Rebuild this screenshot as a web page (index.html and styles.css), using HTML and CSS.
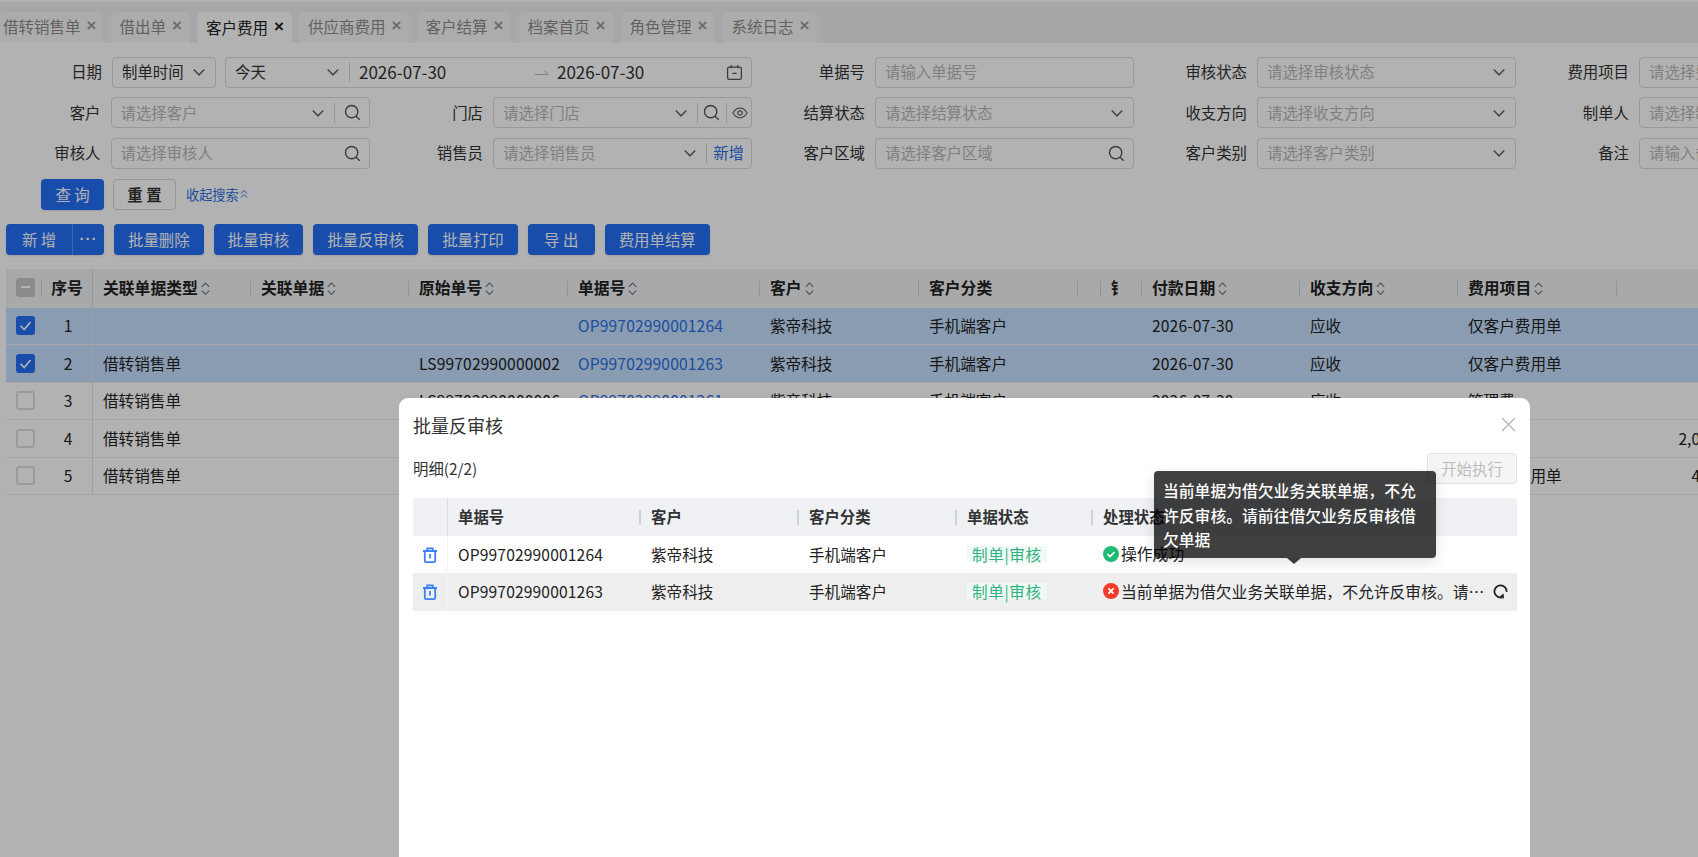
FILE: index.html
```html
<!DOCTYPE html>
<html lang="zh-CN">
<head>
  <meta charset="UTF-8" />
  <title>客户费用</title>
  <link rel="stylesheet" href="styles.css">
</head>
<body>
  <svg class="sprite" xmlns="http://www.w3.org/2000/svg">
    <symbol id="i-down" viewBox="0 0 12 12"><path d="M1.500 3.800 6 8.400l4.500-4.600" fill="none" stroke="currentColor" stroke-width="1.300"/></symbol>
    <symbol id="i-search" viewBox="0 0 16 16"><circle cx="7.200" cy="7.200" r="5.800" fill="none" stroke="currentColor" stroke-width="1.300"/><path d="m11.400 11.600 3.400 3.200" fill="none" stroke="currentColor" stroke-width="1.300"/></symbol>
    <symbol id="i-cal" viewBox="0 0 16 16"><rect x="1.500" y="3" width="13" height="11.500" rx="1.500" fill="none" stroke="currentColor" stroke-width="1.200"/><path d="M5 1v3M11 1v3M6 8.800h4" fill="none" stroke="currentColor" stroke-width="1.200"/></symbol>
    <symbol id="i-eye" viewBox="0 0 16 16"><path d="M1 8c1.800-3.200 4.200-4.800 7-4.800s5.200 1.600 7 4.800c-1.800 3.200-4.200 4.800-7 4.800S2.800 11.200 1 8z" fill="none" stroke="currentColor" stroke-width="1.200"/><circle cx="8" cy="8" r="2.200" fill="none" stroke="currentColor" stroke-width="1.200"/></symbol>
    <symbol id="i-sort" viewBox="0 0 10 16"><path d="M1.500 6.500 5 3l3.500 3.500M1.500 10 5 13.500 8.500 10" fill="none" stroke="currentColor" stroke-width="1.100"/></symbol>
    <symbol id="i-arrow" viewBox="0 0 16 8"><path d="M1 6.500h13L10.500 3" fill="none" stroke="currentColor" stroke-width="1"/></symbol>
    <symbol id="i-trash" viewBox="0 0 16 16"><path d="M1 4h14M5.200 4V1.400h5.600V4M2.800 4v9.800c0 .8.500 1.300 1.300 1.300h7.800c.8 0 1.300-.5 1.300-1.300V4M8 7v4.600" fill="none" stroke="currentColor" stroke-width="1.800"/></symbol>
    <symbol id="i-ok" viewBox="0 0 16 16"><circle cx="8" cy="8" r="8" fill="#22bb76"/><path d="m4.500 8.200 2.500 2.400 4.500-4.600" fill="none" stroke="#fff" stroke-width="1.700"/></symbol>
    <symbol id="i-err" viewBox="0 0 16 16"><circle cx="8" cy="8" r="8" fill="#f5392a"/><path d="m5.400 5.400 5.200 5.200M10.600 5.400l-5.200 5.200" fill="none" stroke="#fff" stroke-width="1.800"/></symbol>
    <symbol id="i-retry" viewBox="0 0 16 16"><path d="M9.800 14.200A6.500 6.500 0 1 1 14.500 8.400" fill="none" stroke="currentColor" stroke-width="1.900"/><path d="m11.400 10 .2 5.800-4.400-2.800z" fill="currentColor"/></symbol>
    <symbol id="i-close" viewBox="0 0 14 14"><path d="m1 1 12 12M13 1 1 13" fill="none" stroke="currentColor" stroke-width="1.200"/></symbol>
  </svg>

  <div class="top-line"></div>

  <div class="tabs">
    <div class="tab tab-first">借转销售单<span class="tab-x">×</span></div>
    <div class="tab tab-2">借出单<span class="tab-x">×</span></div>
    <div class="tab tab-3 active">客户费用<span class="tab-x">×</span></div>
    <div class="tab tab-4">供应商费用<span class="tab-x">×</span></div>
    <div class="tab tab-3">客户结算<span class="tab-x">×</span></div>
    <div class="tab tab-3">档案首页<span class="tab-x">×</span></div>
    <div class="tab tab-3">角色管理<span class="tab-x">×</span></div>
    <div class="tab tab-3">系统日志<span class="tab-x">×</span></div>
  </div>

  <!-- search form -->
  <div class="search-form">
    <div class="form-item span-2">
      <label>日期</label>
      <div class="date-group">
        <div class="field date-type"><span class="val">制单时间</span><svg class="ic-down"><use href="#i-down"/></svg></div>
        <div class="field date-range">
          <span class="val range-name">今天</span><svg class="ic-down"><use href="#i-down"/></svg><i class="sep"></i>
          <span class="val date-a">2026-07-30</span><svg class="ic-arrow"><use href="#i-arrow"/></svg>
          <span class="val date-b">2026-07-30</span><svg class="ic-search"><use href="#i-cal"/></svg>
        </div>
      </div>
    </div>
    <div class="form-item"><label>单据号</label><div class="field"><span class="ph">请输入单据号</span></div></div>
    <div class="form-item"><label>审核状态</label><div class="field"><span class="ph">请选择审核状态</span><svg class="ic-down"><use href="#i-down"/></svg></div></div>
    <div class="form-item"><label>费用项目</label><div class="field"><span class="ph">请选择费用项目</span><svg class="ic-down"><use href="#i-down"/></svg></div></div>

    <div class="form-item"><label>客户</label><div class="field"><span class="ph">请选择客户</span><svg class="ic-down"><use href="#i-down"/></svg><i class="sep"></i><svg class="ic-search"><use href="#i-search"/></svg></div></div>
    <div class="form-item"><label>门店</label><div class="field"><span class="ph">请选择门店</span><svg class="ic-down"><use href="#i-down"/></svg><i class="sep"></i><svg class="ic-search ic-tight"><use href="#i-search"/></svg><i class="sep sep-tight"></i><svg class="ic-eye"><use href="#i-eye"/></svg></div></div>
    <div class="form-item"><label>结算状态</label><div class="field"><span class="ph">请选择结算状态</span><svg class="ic-down"><use href="#i-down"/></svg></div></div>
    <div class="form-item"><label>收支方向</label><div class="field"><span class="ph">请选择收支方向</span><svg class="ic-down"><use href="#i-down"/></svg></div></div>
    <div class="form-item"><label>制单人</label><div class="field"><span class="ph">请选择制单人</span><svg class="ic-down"><use href="#i-down"/></svg></div></div>

    <div class="form-item"><label>审核人</label><div class="field"><span class="ph">请选择审核人</span><svg class="ic-search"><use href="#i-search"/></svg></div></div>
    <div class="form-item"><label>销售员</label><div class="field"><span class="ph">请选择销售员</span><svg class="ic-down"><use href="#i-down"/></svg><i class="sep"></i><a class="link add-link">新增</a></div></div>
    <div class="form-item"><label>客户区域</label><div class="field"><span class="ph">请选择客户区域</span><svg class="ic-search"><use href="#i-search"/></svg></div></div>
    <div class="form-item"><label>客户类别</label><div class="field"><span class="ph">请选择客户类别</span><svg class="ic-down"><use href="#i-down"/></svg></div></div>
    <div class="form-item"><label>备注</label><div class="field"><span class="ph">请输入备注</span></div></div>
  </div>

  <div class="search-actions">
    <button class="btn btn-primary btn-query">查 询</button>
    <button class="btn btn-default btn-reset">重 置</button>
    <a class="collapse-link">收起搜索<svg class="ic-collapse" viewBox="0 0 10 12"><path d="M2 5.500 5 2.500 8 5.500M2 9.500 5 6.500 8 9.500" fill="none" stroke="currentColor" stroke-width="1"/></svg></a>
  </div>

  <div class="toolbar">
    <div class="btn-split"><span class="split-main">新 增</span><span class="split-more">···</span></div>
    <button class="btn btn-primary">批量删除</button>
    <button class="btn btn-primary">批量审核</button>
    <button class="btn btn-primary">批量反审核</button>
    <button class="btn btn-primary">批量打印</button>
    <button class="btn btn-primary btn-export">导 出</button>
    <button class="btn btn-primary">费用单结算</button>
  </div>

  <!-- main list -->
  <table class="grid">
    <colgroup>
      <col class="c36"><col class="c51"><col class="c158"><col class="c158"><col class="c159"><col class="c192"><col class="c159"><col class="c159"><col class="c23"><col class="c41"><col class="c158"><col class="c158"><col class="c159"><col class="c132">
    </colgroup>
    <thead>
      <tr>
        <th class="cell-check"><span class="check check-half"></span></th>
        <th class="cell-no">序号</th>
        <th>关联单据类型<svg class="ic-sort"><use href="#i-sort"/></svg></th>
        <th>关联单据<svg class="ic-sort"><use href="#i-sort"/></svg></th>
        <th>原始单号<svg class="ic-sort"><use href="#i-sort"/></svg></th>
        <th>单据号<svg class="ic-sort"><use href="#i-sort"/></svg></th>
        <th>客户<svg class="ic-sort"><use href="#i-sort"/></svg></th>
        <th>客户分类</th>
        <th></th>
        <th><span class="th-clip">销售员</span></th>
        <th>付款日期<svg class="ic-sort"><use href="#i-sort"/></svg></th>
        <th>收支方向<svg class="ic-sort"><use href="#i-sort"/></svg></th>
        <th>费用项目<svg class="ic-sort"><use href="#i-sort"/></svg></th>
        <th></th>
      </tr>
    </thead>
    <tbody>
      <tr class="selected">
        <td class="cell-check"><span class="check check-on"><svg viewBox="0 0 12 12"><path d="m2 6.200 3 3 5-6" fill="none" stroke="#fff" stroke-width="1.400"/></svg></span></td>
        <td class="cell-no">1</td><td></td><td></td><td></td>
        <td class="code"><a class="link">OP99702990001264</a></td><td>紫帝科技</td><td>手机端客户</td><td></td><td></td>
        <td class="code">2026-07-30</td><td>应收</td><td>仅客户费用单</td><td class="num"></td>
      </tr>
      <tr class="selected">
        <td class="cell-check"><span class="check check-on"><svg viewBox="0 0 12 12"><path d="m2 6.200 3 3 5-6" fill="none" stroke="#fff" stroke-width="1.400"/></svg></span></td>
        <td class="cell-no">2</td><td>借转销售单</td><td></td><td class="code">LS99702990000002</td>
        <td class="code"><a class="link">OP99702990001263</a></td><td>紫帝科技</td><td>手机端客户</td><td></td><td></td>
        <td class="code">2026-07-30</td><td>应收</td><td>仅客户费用单</td><td class="num"></td>
      </tr>
      <tr>
        <td class="cell-check"><span class="check"></span></td>
        <td class="cell-no">3</td><td>借转销售单</td><td></td><td class="code">LS99702990000006</td>
        <td class="code"><a class="link">OP99702990001261</a></td><td>紫帝科技</td><td>手机端客户</td><td></td><td></td>
        <td class="code">2026-07-30</td><td>应收</td><td>管理费</td><td class="num"></td>
      </tr>
      <tr>
        <td class="cell-check"><span class="check"></span></td>
        <td class="cell-no">4</td><td>借转销售单</td><td></td><td class="code">LS99702990000005</td>
        <td class="code"><a class="link">OP99702990001260</a></td><td>紫帝科技</td><td>手机端客户</td><td></td><td></td>
        <td class="code">2026-07-30</td><td>应收</td><td>管理费</td><td class="num">2,000.00</td>
      </tr>
      <tr>
        <td class="cell-check"><span class="check"></span></td>
        <td class="cell-no">5</td><td>借转销售单</td><td></td><td class="code">LS99702990000004</td>
        <td class="code"><a class="link">OP99702990001259</a></td><td>紫帝科技</td><td>手机端客户</td><td></td><td></td>
        <td class="code">2026-07-30</td><td>应收</td><td>仅客户费用单</td><td class="num">400.00</td>
      </tr>
    </tbody>
  </table>

  <div class="mask"></div>

  <!-- batch dialog -->
  <div class="modal">
    <div class="modal-head">
      <h2>批量反审核</h2>
      <svg class="ic-close"><use href="#i-close"/></svg>
    </div>
    <div class="modal-bar">
      <span>明细(2/2)</span>
      <button class="btn btn-disabled">开始执行</button>
    </div>
    <table class="detail">
      <colgroup><col class="d35"><col class="d193"><col class="d158"><col class="d158"><col class="d136"><col class="d424"></colgroup>
      <thead>
        <tr><th class="cell-del"></th><th>单据号</th><th>客户</th><th>客户分类</th><th>单据状态</th><th>处理状态</th></tr>
      </thead>
      <tbody>
        <tr>
          <td class="cell-del"><svg class="ic-trash"><use href="#i-trash"/></svg></td>
          <td class="code">OP99702990001264</td><td>紫帝科技</td><td>手机端客户</td>
          <td><span class="tag">制单|审核</span></td>
          <td><div class="result"><svg class="ic-state"><use href="#i-ok"/></svg><span class="result-text">操作成功</span></div></td>
        </tr>
        <tr class="row-alt">
          <td class="cell-del"><svg class="ic-trash"><use href="#i-trash"/></svg></td>
          <td class="code">OP99702990001263</td><td>紫帝科技</td><td>手机端客户</td>
          <td><span class="tag">制单|审核</span></td>
          <td><div class="result"><svg class="ic-state"><use href="#i-err"/></svg><span class="result-text">当前单据为借欠业务关联单据，不允许反审核。请前往借欠业务反审核借欠单据</span><svg class="ic-retry"><use href="#i-retry"/></svg></div></td>
        </tr>
      </tbody>
    </table>
    <div class="tooltip">当前单据为借欠业务关联单据，不允许反审核。请前往借欠业务反审核借欠单据</div>
  </div>
</body>
</html>
```

FILE: styles.css
```css
* {
  box-sizing: border-box;
}

html, body {
  height: 857px;
  overflow: hidden;
}

body {
  margin: 0;
  background: #fff;
  color: #333;
  font-family: "Noto Sans CJK SC", "Noto Sans", sans-serif;
  font-size: 15.4px;
  position: relative;
}

.sprite {
  display: none;
}

svg {
  flex: none;
}

.top-line {
  height: 2px;
  background: #fff;
}

/* tabs */
.tabs {
  display: flex;
  gap: 7.500px;
  height: 41px;
  padding-top: 10px;
  background: #eff0f3;
  overflow: hidden;
}

.tab {
  display: flex;
  align-items: center;
  gap: 6px;
  height: 31px;
  padding: 0 0 2px 9px;
  background: #f6f7f8;
  border-bottom: 2px solid #fdfdfd;
  border-radius: 5px 5px 0 0;
  color: #8c8c8c;
  font-size: 15.500px;
  white-space: nowrap;
}

.tab-first {
  width: 103px;
  padding-left: 3px;
}

.tab-2 { width: 79px; }
.tab-3 { width: 94.500px; }
.tab-4 { width: 110px; }

.tab.active {
  background: #fff;
  border-bottom: 0;
  color: #222;
}

.tab-x {
  font-family: "Liberation Sans", sans-serif;
  font-size: 17px;
  font-weight: 700;
  line-height: 1;
  color: #9b9b9b;
}

.tab.active .tab-x {
  color: #222;
}

/* form */
.search-form {
  display: grid;
  grid-template-columns: 369.500px 372.500px repeat(3, 372px);
  column-gap: 10px;
  row-gap: 9.700px;
  margin-top: 13.500px;
  width: 1900px;
}

.form-item {
  display: flex;
  align-items: center;
  gap: 10px;
}

.form-item label {
  flex: 1;
  text-align: right;
  white-space: nowrap;
  padding-bottom: 2px;
}

.form-item > .field {
  flex: none;
  width: 259px;
}

.span-2 {
  grid-column: span 2;
}

.form-item > .date-group {
  flex: none;
  display: flex;
  gap: 9px;
  width: 640px;
}

.field {
  display: flex;
  align-items: center;
  height: 31px;
  padding: 0 9px;
  border: 1px solid #dcdcdc;
  border-radius: 4px;
  background: #fff;
  white-space: nowrap;
  overflow: hidden;
}

.field .val, .field .ph, .field .add-link {
  padding-bottom: 2px;
}

.date-type {
  width: 104px;
  flex: none;
}

.date-range {
  flex: 1;
}

.val {
  flex: 1;
  color: #333;
}

.ph {
  flex: 1;
  color: #b8b8b8;
}

.range-name {
  flex: none;
  width: 91px;
}

.date-a {
  flex: none;
  width: 175px;
  font-size: 17px;
}

.date-b {
  flex: 1;
  margin-left: 7px;
  font-size: 17px;
}

.ic-down {
  width: 14px;
  height: 14px;
  color: #666;
}

.ic-search {
  width: 17px;
  height: 17px;
  margin-right: -1px;
  color: #555;
}

.ic-tight {
  margin: 0 0 0 -4px;
}

.ic-eye {
  width: 16px;
  height: 16px;
  color: #666;
  margin-right: -6px;
}

.ic-arrow {
  width: 16px;
  height: 8px;
  color: #bbb;
}

.sep {
  flex: none;
  width: 1px;
  height: 20px;
  margin: 0 9px;
  background: #d5d5d5;
}

.sep-tight {
  margin: 0 5px 0 6px;
}

.link {
  color: #2b6fe6;
}

.add-link {
  margin: 0 -2px 0 -3px;
}

/* buttons */
.btn {
  height: 31px;
  padding: 0 13px 1px;
  border: 1px solid transparent;
  border-radius: 4px;
  font: inherit;
  white-space: nowrap;
}

.btn-primary {
  background: #256ff5;
  color: #fff;
  box-shadow: 0 1px 2px rgba(0, 0, 0, .12);
}

.btn-default {
  background: #fff;
  border-color: #d9d9d9;
  color: #333;
  font-weight: 600;
}

.btn-disabled {
  width: 90px;
  padding: 0 0 2px;
  background: #f5f5f5;
  border-color: #e3e3e3;
  color: #bdbdbd;
}

.search-actions {
  display: flex;
  align-items: center;
  gap: 9px;
  margin-top: 10px;
  padding-left: 41px;
}

.btn-query {
  width: 63px;
  padding: 0 0 1px;
}

.btn-reset {
  width: 63px;
  padding: 0 0 1px;
}

.collapse-link {
  display: flex;
  align-items: center;
  color: #2b6fe6;
  font-size: 13.200px;
  margin-left: 1px;
}

.ic-collapse {
  width: 10px;
  height: 12px;
}

.toolbar {
  display: flex;
  align-items: center;
  gap: 10px;
  margin-top: 14px;
  padding-left: 6px;
}

.btn-split {
  display: flex;
  flex: none;
  width: 98px;
  height: 31px;
  border-radius: 4px;
  background: #256ff5;
  color: #fff;
  line-height: 30px;
  text-align: center;
  box-shadow: 0 1px 2px rgba(0, 0, 0, .12);
}

.split-main {
  flex: none;
  width: 67px;
  border-right: 1px solid #5b93f8;
}

.split-more {
  flex: 1;
  font-family: "Liberation Sans", sans-serif;
  font-size: 15px;
  font-weight: 700;
  letter-spacing: 1px;
}

.btn-export {
  width: 67px;
  padding: 0 0 1px;
}

/* main table */
.grid, .detail {
  table-layout: fixed;
  border-collapse: separate;
  border-spacing: 0;
}

.grid {
  width: 1743px;
  margin: 14px 0 0 6px;
}

.c36 { width: 36px; }
.c51 { width: 51px; }
.c158 { width: 158px; }
.c159 { width: 159px; }
.c192 { width: 192px; }
.c23 { width: 23px; }
.c41 { width: 41px; }
.c132 { width: 132px; }

.grid th {
  position: relative;
  height: 39px;
  padding: 0 0 1px 10px;
  background: #f1f2f5;
  color: #222;
  font-size: 15.800px;
  font-weight: 600;
  text-align: left;
  white-space: nowrap;
  overflow: hidden;
}

.grid th::after {
  content: "";
  position: absolute;
  right: 0;
  top: 12px;
  width: 1px;
  height: 15px;
  background: #cfd3da;
}

.grid th:last-child::after {
  display: none;
}

.th-clip {
  display: inline-block;
  width: 7px;
  overflow: hidden;
  vertical-align: bottom;
}

.grid td {
  height: 37.500px;
  padding: 0 0 2px 10px;
  border-bottom: 1px solid #eee;
  color: #222;
  font-size: 15.600px;
  white-space: nowrap;
  overflow: hidden;
}

.code {
  letter-spacing: .15px;
}

.grid .cell-no {
  padding: 0 0 1px;
  text-align: center;
  border-right: 1px solid #e3e3e3;
}

.grid td.cell-no {
  padding: 0 0 2px 2px;
}

.grid th.cell-no {
  border-right: 1px solid #d5d8de;
}

.grid th.cell-no::after {
  display: none;
}

.grid .cell-check {
  padding: 0 0 1px 9.500px;
}

.grid .num {
  padding: 0 10px 2px 0;
  text-align: right;
}

.selected td {
  background: #c5e0ff;
  border-bottom-color: #f0f0f0;
}

.check {
  display: block;
  width: 19px;
  height: 19px;
  border: 2px solid #dedede;
  border-radius: 3px;
  background: #fff;
}

.check-on {
  background: #256ff5;
  border-color: #256ff5;
}

.check-on svg {
  display: block;
  width: 15px;
  height: 15px;
}

.check-half {
  position: relative;
  background: #c8c8c8;
  border-color: #c8c8c8;
}

.check-half::after {
  content: "";
  position: absolute;
  left: 3px;
  top: 6px;
  width: 9px;
  height: 2px;
  background: #fff;
}

.ic-sort {
  width: 11px;
  height: 17px;
  margin-left: 2px;
  color: #777;
  vertical-align: -3px;
}

/* dialog */
.mask {
  position: absolute;
  inset: 0;
  background: rgba(0, 0, 0, .3);
}

.modal {
  position: absolute;
  left: 399px;
  top: 398px;
  width: 1131px;
  height: 600px;
  padding: 0 13px 0 14px;
  background: #fff;
  border-radius: 9px;
}

.modal-head {
  display: flex;
  align-items: center;
  justify-content: space-between;
  height: 55px;
  padding-bottom: 2px;
}

.modal-head h2 {
  margin: 0;
  font-size: 18px;
  font-weight: 400;
  color: #333;
}

.ic-close {
  width: 15px;
  height: 15px;
  margin-right: 1px;
  color: #b5b5b5;
}

.modal-bar {
  display: flex;
  align-items: center;
  justify-content: space-between;
  color: #333;
}

.modal-bar span {
  padding-bottom: 2px;
}

.detail {
  width: 1104px;
  margin-top: 14px;
}

.d35 { width: 35px; }
.d193 { width: 193px; }
.d158 { width: 158px; }
.d136 { width: 136px; }
.d424 { width: 424px; }

.detail th {
  position: relative;
  height: 38px;
  padding: 0 0 2px 10px;
  background: #f0f1f5;
  color: #333;
  font-weight: 600;
  text-align: left;
}

.detail th::after {
  content: "";
  position: absolute;
  right: 0;
  top: 12px;
  width: 2px;
  height: 15px;
  background: #ced2db;
}

.detail th:last-child::after, .detail th:first-child::after {
  display: none;
}

.detail th.cell-del {
  border-right: 1px solid #dcdde2;
}

.detail td {
  height: 37px;
  padding: 0 0 2px 10px;
  color: #222;
  font-size: 15.600px;
  white-space: nowrap;
}

.detail td.cell-del {
  padding: 0;
  text-align: center;
  border-right: 1px solid #f3f3f3;
}

.row-alt td {
  background: #eeeeee;
  height: 38px;
}

.ic-trash {
  display: block;
  width: 16px;
  height: 16px;
  margin: 0 auto;
  color: #3b82f6;
}

.tag {
  display: inline-block;
  padding: 0 5px;
  background: #eff9f5;
  color: #2fb380;
  line-height: 16px;
  letter-spacing: .6px;
}

.result {
  display: flex;
  align-items: center;
  gap: 2px;
  width: 405px;
}

.result-text {
  flex: 1;
  min-width: 0;
  font-size: 15.800px;
  overflow: hidden;
  text-overflow: ellipsis;
}

.ic-state {
  width: 16px;
  height: 16px;
}

.ic-retry {
  width: 15px;
  height: 15px;
  margin-left: 4px;
  color: #222;
}

.tooltip {
  position: absolute;
  left: 755px;
  top: 73px;
  width: 282px;
  padding: 8px 9px 5px;
  background: rgba(0, 0, 0, .75);
  border-radius: 4px;
  box-shadow: 0 4px 14px rgba(0, 0, 0, .12);
  color: #fff;
  font-size: 15.800px;
  font-weight: 500;
  line-height: 24.500px;
}

.tooltip::after {
  content: "";
  position: absolute;
  left: 133px;
  bottom: -6px;
  border: 7px solid transparent;
  border-top-color: rgba(0, 0, 0, .75);
  border-bottom: 0;
  border-top-width: 6px;
}
```
